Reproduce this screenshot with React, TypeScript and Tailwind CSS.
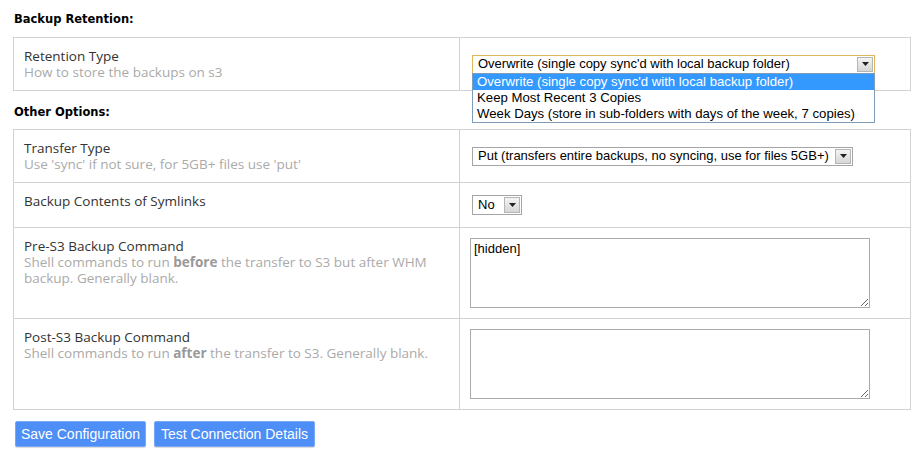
import React from "react";

const labelFont = { fontFamily: '"Open Sans", "DejaVu Sans", sans-serif' };
const arial = { fontFamily: '"Liberation Sans", Arial, sans-serif' };

function Arrow() {
  return (
    <div className="flex h-full w-[16px] items-center justify-center border border-[#b5b5b5] bg-gradient-to-b from-[#f4f4f4] to-[#d6d6d6]">
      <svg width="7" height="4" viewBox="0 0 7 4">
        <path d="M0 0 H7 L3.5 4 Z" fill="#222" />
      </svg>
    </div>
  );
}

function Select({
  value,
  width,
  height,
  focused,
}: {
  value: string;
  width: string;
  height: string;
  focused?: boolean;
}) {
  return (
    <div
      className={`flex items-stretch bg-white p-px ${width} ${height} border ${
        focused ? "border-[#e0b85c]" : "border-[#a5a5a5]"
      }`}
    >
      <div className="flex flex-1 items-center overflow-hidden whitespace-nowrap pl-[4px] text-[13px] text-black" style={arial}>
        {value}
      </div>
      <Arrow />
    </div>
  );
}

function LabelCell({ title, children }: { title: string; children?: React.ReactNode }) {
  return (
    <div className="border-r border-[#d3d3d3] pl-[10px] pr-[10px] pt-[10px] text-[13.5px] leading-[16px]" style={labelFont}>
      <div className="text-[#333]">{title}</div>
      {children && <div className="text-[#aaaaaa]">{children}</div>}
    </div>
  );
}

function Heading({ children }: { children: React.ReactNode }) {
  return (
    <div className="pl-[14px] text-[11.5px] font-bold leading-[16px] text-black" style={{ fontFamily: '"DejaVu Sans", Verdana, sans-serif' }}>
      {children}
    </div>
  );
}

export default function App() {
  return (
    <div className="relative h-[457px] w-[924px] bg-white">
      <div className="pt-[11px]">
        <Heading>Backup Retention:</Heading>
      </div>
      <div className="ml-[13px] mt-[10px] grid w-[898px] grid-cols-[446px_1fr] border border-[#d3d3d3]">
        <div className="h-[52px] border-r border-[#d3d3d3] pl-[10px] pt-[10px] text-[13.5px] leading-[16px]" style={labelFont}>
          <div className="text-[#333]">Retention Type</div>
          <div className="text-[#aaaaaa]">How to store the backups on s3</div>
        </div>
        <div className="relative flex items-center pl-[12px]">
          <Select value="Overwrite (single copy sync'd with local backup folder)" width="w-[403px]" height="h-[19px]" focused />
          <div
            className="absolute left-[12px] top-[35px] z-10 w-[403px] border border-[#7f9db9] bg-white text-[13.2px] leading-[16px] text-black"
            style={arial}
          >
            <div className="bg-[#3399ff] pl-[4px] text-white">Overwrite (single copy sync'd with local backup folder)</div>
            <div className="pl-[4px]">Keep Most Recent 3 Copies</div>
            <div className="pl-[4px]">Week Days (store in sub-folders with days of the week, 7 copies)</div>
          </div>
        </div>
      </div>

      <div className="pt-[13px]">
        <Heading>Other Options:</Heading>
      </div>

      <div className="ml-[13px] mt-[9px] w-[898px] border border-[#d3d3d3]">
        <div className="grid h-[53px] grid-cols-[446px_1fr] border-b border-[#d3d3d3]">
          <LabelCell title="Transfer Type">Use 'sync' if not sure, for 5GB+ files use 'put'</LabelCell>
          <div className="flex items-center pl-[12px]">
            <Select value="Put (transfers entire backups, no syncing, use for files 5GB+)" width="w-[381px]" height="h-[19px]" />
          </div>
        </div>
        <div className="grid h-[45px] grid-cols-[446px_1fr] border-b border-[#d3d3d3]">
          <LabelCell title="Backup Contents of Symlinks" />
          <div className="flex items-center pl-[12px]">
            <Select value="No" width="w-[50px]" height="h-[20px]" />
          </div>
        </div>
        <div className="grid h-[91px] grid-cols-[446px_1fr] border-b border-[#d3d3d3]">
          <LabelCell title="Pre-S3 Backup Command">
            Shell commands to run <b className="text-[#999]">before</b> the transfer to S3 but after WHM backup. Generally blank.
          </LabelCell>
          <div className="flex items-center pl-[10px]">
            <textarea
              defaultValue="[hidden]"
              className="h-[70px] w-[400px] border border-[#ababab] px-[3px] py-[2px] text-[13px] leading-[16px] text-black outline-none"
              style={arial}
            />
          </div>
        </div>
        <div className="grid h-[90px] grid-cols-[446px_1fr]">
          <LabelCell title="Post-S3 Backup Command">
            Shell commands to run <b className="text-[#999]">after</b> the transfer to S3. Generally blank.
          </LabelCell>
          <div className="flex items-center pl-[10px]">
            <textarea
              className="h-[70px] w-[400px] border border-[#ababab] px-[3px] py-[2px] text-[13px] leading-[16px] text-black outline-none"
              style={arial}
            />
          </div>
        </div>
      </div>

      <div className="ml-[15px] mt-[11px] flex gap-[8px]" style={arial}>
        <button className="h-[26px] w-[131px] rounded-[2px] border border-[#7aa8f5] bg-[#4d8ef7] text-[14px] text-white shadow-[0_1px_1px_rgba(0,0,0,0.15)]">Save Configuration</button>
        <button className="h-[26px] w-[161px] rounded-[2px] border border-[#7aa8f5] bg-[#4d8ef7] text-[14px] text-white shadow-[0_1px_1px_rgba(0,0,0,0.15)]">Test Connection Details</button>
      </div>
    </div>
  );
}
